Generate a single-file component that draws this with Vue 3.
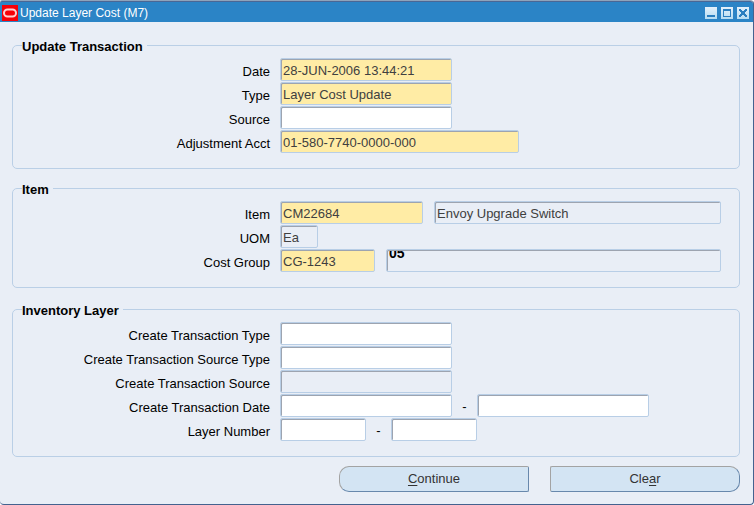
<script setup>
import { ref } from 'vue'

const transaction = ref({
  date: '28-JUN-2006 13:44:21',
  type: 'Layer Cost Update',
  source: '',
  account: '01-580-7740-0000-000',
})
const item = ref({
  number: 'CM22684',
  description: 'Envoy Upgrade Switch',
  uom: 'Ea',
  costGroup: 'CG-1243',
  costGroupName: '05',
})
const layer = ref({
  type: '',
  sourceType: '',
  source: '',
  dateFrom: '',
  dateTo: '',
  numberFrom: '',
  numberTo: '',
})

function clearLayer() {
  for (const key of Object.keys(layer.value)) layer.value[key] = ''
}
</script>

<template>
  <div class="window">
    <header class="titlebar">
      <svg class="logo" viewBox="0 0 16 16" aria-hidden="true">
        <rect width="16" height="16" fill="#f80008" />
        <rect x="2" y="4.5" width="12" height="7" rx="3.5" fill="none" stroke="#ffd0d0" stroke-width="2" />
      </svg>
      <h1 class="title">Update Layer Cost (M7)</h1>
      <div class="controls">
        <button type="button" class="control" aria-label="Minimize">
          <svg viewBox="0 0 12 12"><rect x="2" y="8" width="8" height="2" fill="#2b7fc0" /></svg>
        </button>
        <button type="button" class="control" aria-label="Maximize">
          <svg viewBox="0 0 12 12">
            <path d="M2 2h8v8h-8z M3 4v5h6v-5z" fill="#2b7fc0" fill-rule="evenodd" />
          </svg>
        </button>
        <button type="button" class="control" aria-label="Close">
          <svg viewBox="0 0 12 12">
            <path d="M2 2h2v1h1v1h2v-1h1v-1h2v2h-1v1h-1v2h1v1h1v2h-2v-1h-1v-1h-2v1h-1v1h-2v-2h1v-1h1v-2h-1v-1h-1z" fill="#2b7fc0" />
          </svg>
        </button>
      </div>
    </header>

    <form class="content" @submit.prevent>
      <fieldset class="group">
        <legend>Update Transaction</legend>
        <div class="row">
          <label for="date">Date</label>
          <input id="date" v-model="transaction.date" class="field required medium" type="text" />
        </div>
        <div class="row">
          <label for="type">Type</label>
          <input id="type" v-model="transaction.type" class="field required medium" type="text" />
        </div>
        <div class="row">
          <label for="source">Source</label>
          <input id="source" v-model="transaction.source" class="field medium" type="text" />
        </div>
        <div class="row">
          <label for="account">Adjustment Acct</label>
          <input id="account" v-model="transaction.account" class="field required long" type="text" />
        </div>
      </fieldset>

      <fieldset class="group item-group">
        <legend>Item</legend>
        <div class="row">
          <label for="item">Item</label>
          <input id="item" v-model="item.number" class="field required code" type="text" />
          <input v-model="item.description" class="field readonly detail" type="text" readonly aria-label="Item description" />
        </div>
        <div class="row">
          <label for="uom">UOM</label>
          <input id="uom" v-model="item.uom" class="field readonly unit" type="text" readonly />
        </div>
        <div class="row">
          <label for="cost-group">Cost Group</label>
          <input id="cost-group" v-model="item.costGroup" class="field required short" type="text" />
          <output class="field readonly detail" for="cost-group">
            <span class="clipped">{{ item.costGroupName }}</span>
          </output>
        </div>
      </fieldset>

      <fieldset class="group layer-group">
        <legend>Inventory Layer</legend>
        <div class="row">
          <label for="layer-type">Create Transaction Type</label>
          <input id="layer-type" v-model="layer.type" class="field medium" type="text" />
        </div>
        <div class="row">
          <label for="layer-source-type">Create Transaction Source Type</label>
          <input id="layer-source-type" v-model="layer.sourceType" class="field medium" type="text" />
        </div>
        <div class="row">
          <label for="layer-source">Create Transaction Source</label>
          <input id="layer-source" v-model="layer.source" class="field readonly medium" type="text" readonly />
        </div>
        <div class="row">
          <label for="date-from">Create Transaction Date</label>
          <input id="date-from" v-model="layer.dateFrom" class="field medium" type="text" />
          <span class="dash">-</span>
          <input v-model="layer.dateTo" class="field medium" type="text" aria-label="Create Transaction Date to" />
        </div>
        <div class="row">
          <label for="number-from">Layer Number</label>
          <input id="number-from" v-model="layer.numberFrom" class="field number" type="text" />
          <span class="dash">-</span>
          <input v-model="layer.numberTo" class="field number" type="text" aria-label="Layer Number to" />
        </div>
      </fieldset>

      <div class="actions">
        <button type="submit" class="action first" accesskey="c"><u>C</u>ontinue</button>
        <button type="button" class="action last" accesskey="a" @click="clearLayer">Cle<u>a</u>r</button>
      </div>
    </form>
  </div>
</template>

<style>
body {
  background: #fff;
}
</style>

<style scoped>
.window {
  box-sizing: border-box;
  min-height: 100vh;
  border-top: 1px solid #8fa3bb;
  border-right: 1px solid #44628f;
  border-bottom: 1px solid #44628f;
  border-radius: 2px 4px 4px 4px;
  background: #e9eef6;
  color: #000;
  font: 13px/16px "Liberation Sans", Arial, sans-serif;
}

.titlebar {
  display: flex;
  align-items: center;
  box-sizing: border-box;
  height: 21px;
  padding: 1px 4px 0 2px;
  border-top: 1px solid #4a6795;
  border-radius: 2px 3px 0 0;
  background: #2b84c6;
}

.logo {
  width: 16px;
  height: 16px;
}

.title {
  flex: 1;
  margin: 0 0 0 2px;
  color: #fff;
  font-size: 12px;
  font-weight: 400;
}

.controls {
  display: flex;
  gap: 4px;
}

.control {
  width: 12px;
  height: 12px;
  padding: 0;
  border: 0;
  background: linear-gradient(#e4f1fb, #b5dcf2);
}

.control svg {
  display: block;
  width: 12px;
  height: 12px;
}

.content {
  padding: 15px 13px 12px 12px;
}

.group {
  min-width: 0;
  margin: 0;
  padding: 4px 18px 15px 0;
  border: 1px solid #bacfe6;
  border-radius: 5px;
}

.item-group {
  margin-top: 11px;
}

.layer-group {
  margin-top: 13px;
}

legend {
  margin-left: 9px;
  padding: 3px 4px 0 0;
  font-weight: 700;
  line-height: 14px;
}

.row {
  display: flex;
  align-items: center;
}

.row + .row {
  margin-top: 1px;
}

label {
  width: 257px;
  margin-right: 10px;
  padding-top: 5px;
  text-align: right;
}

.field {
  box-sizing: border-box;
  height: 23px;
  margin: 0;
  padding: 1px 1px 0 2px;
  border: 1px solid #b8cee6;
  border-radius: 2px;
  outline: 0;
  background: #fff;
  box-shadow: inset 1px 1px 0 #9da4b0;
  color: #404040;
  font: inherit;
}

.required {
  background: #ffeca5;
}

.readonly {
  background: #e9eef6;
}

.medium {
  width: 172px;
}

.long {
  width: 239px;
}

.code {
  width: 143px;
}

.short {
  width: 95px;
}

.number {
  width: 86px;
}

.unit {
  width: 38px;
}

.detail {
  flex: 1;
  min-width: 0;
  margin-left: 11px;
}

.clipped {
  display: block;
  height: 20px;
  overflow: hidden;
  color: #000;
  font-size: 14px;
  font-weight: 700;
  line-height: 4px;
}

.dash {
  width: 25px;
  padding-top: 3px;
  text-align: center;
}

.actions {
  display: flex;
  justify-content: flex-end;
  gap: 21px;
  margin-top: 9px;
}

.action {
  box-sizing: border-box;
  width: 190px;
  height: 26px;
  padding: 0;
  border: 1px solid;
  border-color: #a3a3a3 #6888ac #6888ac #a3a3a3;
  background: #d3e4f3;
  color: #333;
  font: inherit;
}

.first {
  border-radius: 10px 2px 2px 10px;
}

.last {
  border-radius: 2px 10px 10px 2px;
}

u {
  text-underline-offset: 2px;
}
</style>
